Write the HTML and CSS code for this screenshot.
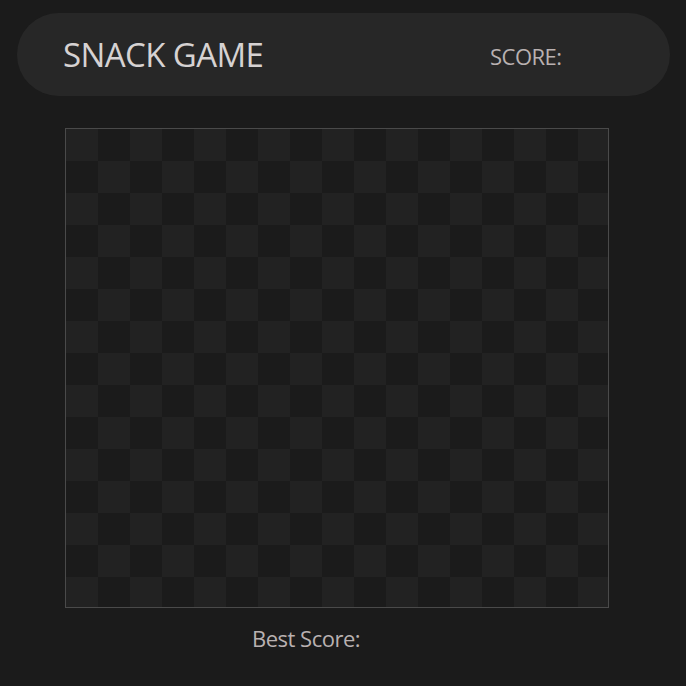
FILE: index.html
```html
<!DOCTYPE html>
<html>
<head>
<meta charset="utf-8">
<link rel="stylesheet" href="styles.css">
</head>
<body>
<div class="app">
  <header class="bar">
    <h1 class="title">SNACK GAME</h1>
    <div class="score">SCORE:</div>
  </header>
  <div class="board"></div>
  <div class="best">Best Score:</div>
</div>
</body>
</html>
```
FILE: styles.css
```css
html, body {
  margin: 0;
  padding: 0;
  background: #1b1b1b;
  width: 686px;
  height: 686px;
  overflow: hidden;
  font-family: "Open Sans", "Noto Sans", sans-serif;
}
.app {
  display: flex;
  flex-direction: column;
  padding-top: 13px;
}
.bar {
  margin-left: 17px;
  width: 653px;
  height: 83px;
  box-sizing: border-box;
  border-radius: 42px;
  background: #272727;
  display: flex;
  align-items: center;
  padding-left: 46px;
}
.title {
  margin: 0;
  font-weight: 400;
  font-size: 33px;
  color: #d6d2d2;
  letter-spacing: -0.6px;
  width: 427px;
}
.score {
  font-size: 22px;
  color: #b9b1b1;
  letter-spacing: -0.5px;
  padding-top: 2px;
}
.board {
  margin-top: 32px;
  margin-left: 65px;
  width: 542px;
  height: 478px;
  border: 1px solid #4a4a4a;
  background-color: #1b1b1b;
  background-image: conic-gradient(#1b1b1b 25%, #222222 0 50%, #1b1b1b 0 75%, #222222 0);
  background-size: 64px 64px;
}
.best {
  margin-top: 15px;
  margin-left: 252px;
  font-size: 22px;
  color: #b9b1b1;
  letter-spacing: -0.5px;
}
```
